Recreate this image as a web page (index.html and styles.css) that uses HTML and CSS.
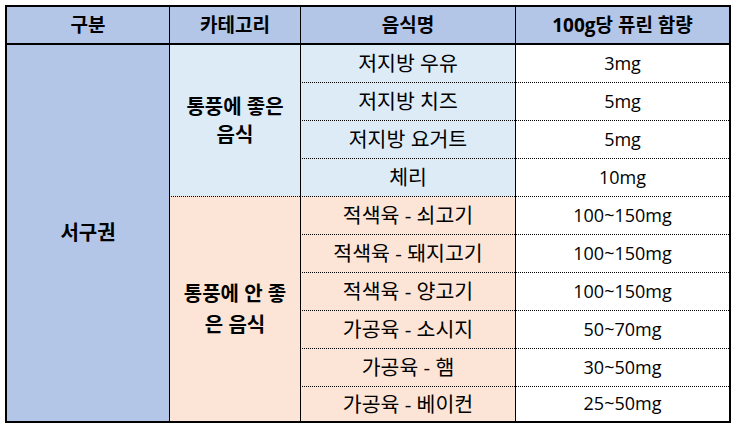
FILE: index.html
```html
<!DOCTYPE html>
<html lang="ko">
<head>
<meta charset="utf-8">
<title>통풍 음식 퓨린 함량</title>
<link rel="stylesheet" href="styles.css">
</head>
<body>
<table class="purine">
  <colgroup>
    <col class="col-region">
    <col class="col-cat">
    <col class="col-food">
    <col class="col-val">
  </colgroup>
  <thead>
    <tr class="head-row">
      <th>구분</th>
      <th class="sep">카테고리</th>
      <th class="sep">음식명</th>
      <th class="sep">100g당 퓨린 함량</th>
    </tr>
  </thead>
  <tbody>
    <tr class="row-first">
      <td class="region" rowspan="10">서구권</td>
      <td class="cat good sep" rowspan="4"><span class="cat-text good-text">통풍에 좋은<br>음식</span></td>
      <td class="food good sep">저지방 우유</td>
      <td class="val sep">3mg</td>
    </tr>
    <tr class="row">
      <td class="food good sep dot">저지방 치즈</td>
      <td class="val sep dot">5mg</td>
    </tr>
    <tr class="row">
      <td class="food good sep dot">저지방 요거트</td>
      <td class="val sep dot">5mg</td>
    </tr>
    <tr class="row">
      <td class="food good sep dot">체리</td>
      <td class="val sep dot">10mg</td>
    </tr>
    <tr class="row">
      <td class="cat bad sep dot" rowspan="6"><span class="cat-text bad-text">통풍에 안 좋<br>은 음식</span></td>
      <td class="food bad sep dot">적색육 - 쇠고기</td>
      <td class="val sep dot">100~150mg</td>
    </tr>
    <tr class="row">
      <td class="food bad sep dot">적색육 - 돼지고기</td>
      <td class="val sep dot">100~150mg</td>
    </tr>
    <tr class="row">
      <td class="food bad sep dot">적색육 - 양고기</td>
      <td class="val sep dot">100~150mg</td>
    </tr>
    <tr class="row">
      <td class="food bad sep dot">가공육 - 소시지</td>
      <td class="val sep dot">50~70mg</td>
    </tr>
    <tr class="row">
      <td class="food bad sep dot">가공육 - 햄</td>
      <td class="val sep dot">30~50mg</td>
    </tr>
    <tr class="row-last">
      <td class="food bad sep dot">가공육 - 베이컨</td>
      <td class="val sep dot">25~50mg</td>
    </tr>
  </tbody>
</table>
</body>
</html>
```

FILE: styles.css
```css
* {
  box-sizing: border-box;
}

html, body {
  background: #ffffff;
}

body {
  margin: 5px;
  font-family: "Open Sans", "Noto Sans CJK KR", sans-serif;
  font-size: 19px;
  color: #000000;
}

.purine {
  border-collapse: separate;
  border-spacing: 0;
  border: 2px solid #000000;
  table-layout: fixed;
  width: 726px;
}

.col-region { width: 162px; }
.col-cat { width: 131px; }
.col-food { width: 215px; }
.col-val { width: 214px; }

.purine th,
.purine td {
  padding: 0;
  text-align: center;
  vertical-align: middle;
  line-height: 1.2;
  white-space: nowrap;
}

.head-row th {
  height: 38px;
  background: #b4c6e7;
  font-weight: 700;
  font-size: 19px;
  border-bottom: 2px solid #000000;
}

.row-first td { height: 37px; }
.row td { height: 38px; }
.row-last td { height: 35px; }

.sep {
  border-left: 1px solid #000000;
}

.dot {
  border-top: 1px dotted #000000;
}

.region {
  background: #b4c6e7;
  font-weight: 700;
  font-size: 20px;
}

.cat {
  font-weight: 700;
  font-size: 20px;
}

.cat-text {
  display: block;
}

.good-text { line-height: 28px; }
.bad-text { line-height: 31px; }

.food {
  font-size: 20.5px;
}

.good { background: #ddebf7; }
.bad { background: #fce4d6; }

.val {
  background: #ffffff;
  font-size: 18px;
}
```
